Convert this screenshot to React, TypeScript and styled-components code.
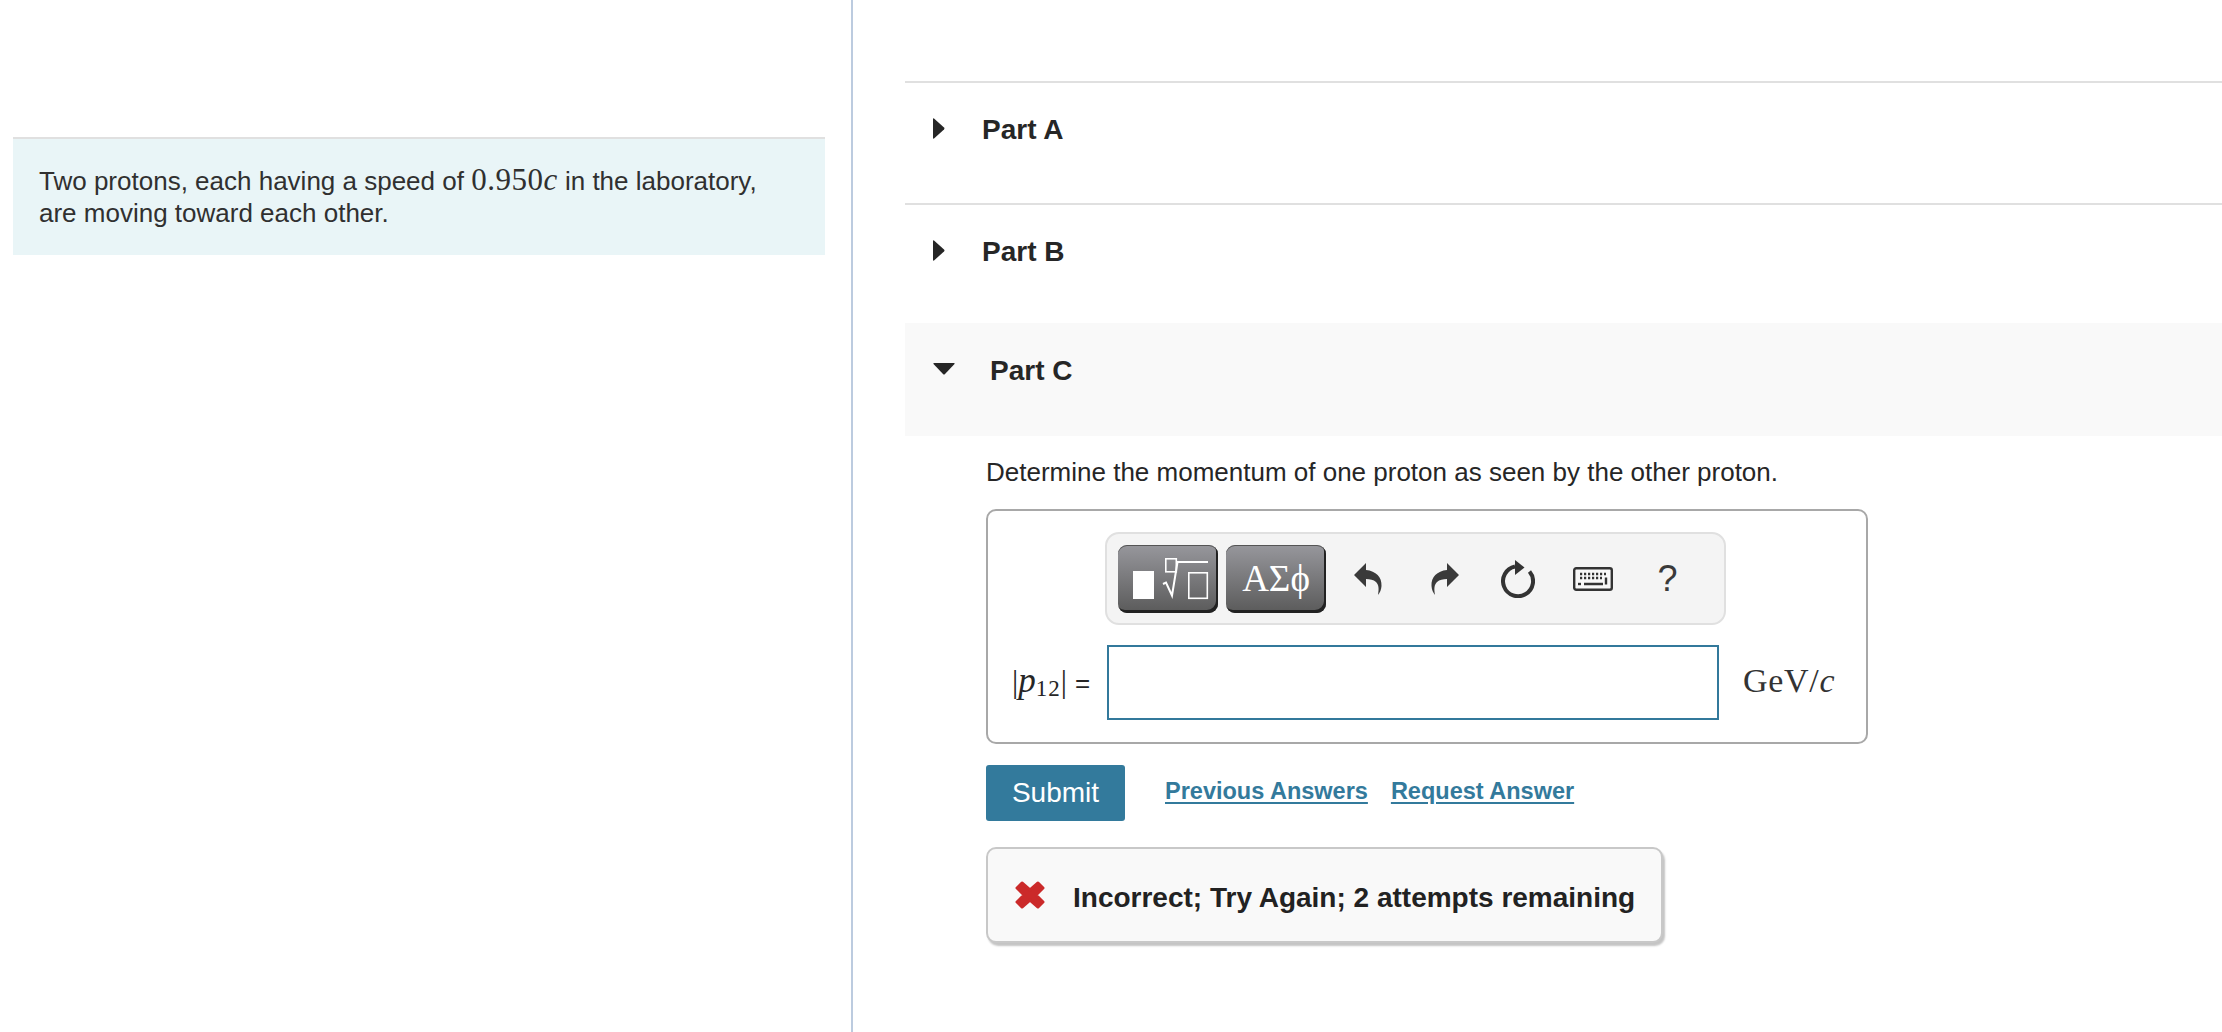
import styled, { createGlobalStyle } from 'styled-components';

const GlobalStyle = createGlobalStyle`
    html, body {
        margin: 0;
        padding: 0;
        background: #fff;
    }
    body {
        font-family: "Liberation Sans", Arial, sans-serif;
        color: #262626;
    }
`;

const Page = styled.div`
    display: flex;
    width: 2222px;
    height: 1032px;
    overflow: hidden;
`;

const LeftPane = styled.aside`
    box-sizing: border-box;
    flex: 0 0 853px;
    height: 100%;
    padding: 137px 26px 0 13px;
    border-right: 2px solid #bccbdf;
`;

const IntroBox = styled.div`
    box-sizing: border-box;
    height: 118px;
    padding: 25px 26px 0;
    border-top: 2px solid #e0e0e0;
    background: #e9f5f7;
    font-size: 26px;
    line-height: 32px;
    color: #303030;
`;

const MathText = styled.span`
    font-family: "Liberation Serif", "Times New Roman", serif;
    font-size: 31px;
    letter-spacing: 0.5px;

    i {
        font-style: italic;
    }
`;

const RightPane = styled.main`
    flex: 1;
    min-width: 0;
    padding: 81px 0 0 52px;
`;

const PartRow = styled.div<{ $open?: boolean; $height: number }>`
    box-sizing: border-box;
    display: flex;
    height: ${props => props.$height}px;
    padding: ${props => (props.$open ? '37px' : '35px')} 0 0 28px;
    border-top: ${props => (props.$open ? 'none' : '2px solid #e0e0e0')};
    background: ${props => (props.$open ? '#f9f9f9' : 'transparent')};
`;

const Caret = styled.svg<{ $open?: boolean }>`
    flex: none;
    width: ${props => (props.$open ? '22px' : '12px')};
    height: ${props => (props.$open ? '12px' : '21px')};
    margin-top: ${props => (props.$open ? '3px' : '0')};
    fill: #262626;
`;

const PartTitle = styled.h3<{ $open?: boolean }>`
    margin: ${props => (props.$open ? '-5px' : '-4px')} 0 0 ${props => (props.$open ? '35px' : '37px')};
    font-size: 28px;
    line-height: 32px;
    font-weight: 700;
    color: #262626;
`;

const PartBody = styled.div`
    margin-left: 81px;
    padding-top: 20px;
`;

const Question = styled.p`
    margin: 0 0 21px;
    font-size: 26px;
    line-height: 32px;
    color: #262626;
`;

const AnswerBox = styled.div`
    box-sizing: border-box;
    width: 882px;
    height: 235px;
    padding-top: 21px;
    border: 2px solid #a8a8a8;
    border-radius: 10px;
`;

const Toolbar = styled.div`
    box-sizing: border-box;
    display: flex;
    align-items: center;
    width: 621px;
    height: 93px;
    margin-left: 117px;
    padding-left: 11px;
    border: 2px solid #e0e0e0;
    border-radius: 14px;
    background: #f4f4f4;
`;

const PaletteButton = styled.button`
    box-sizing: border-box;
    display: flex;
    align-items: center;
    justify-content: center;
    width: 100px;
    height: 68px;
    margin-right: 8px;
    padding: 0;
    border: none;
    border-radius: 9px;
    background: linear-gradient(#97979c, #5a5a5a);
    box-shadow: inset -2px -3px 0 #222, inset 0 1px 0 #555;
    font-family: "Liberation Serif", serif;
    font-size: 37px;
    color: #fff;

    svg {
        width: 100px;
        height: 68px;
    }
`;

const ToolSlot = styled.div<{ $nudge?: number }>`
    flex: 0 0 75px;
    box-sizing: border-box;
    display: flex;
    align-items: center;
    justify-content: center;
    padding-left: ${props => props.$nudge ?? 0}px;
    font-size: 36px;
    color: #3a3a3a;

    &:first-of-type {
        margin-left: -4px;
    }
`;

const InputRow = styled.div`
    display: flex;
    align-items: center;
    margin-top: 20px;
`;

const AnswerLabel = styled.label`
    flex: 0 0 119px;
    box-sizing: border-box;
    margin-top: -3px;
    padding-left: 24px;
    font-family: "Liberation Serif", serif;
    font-size: 31px;
    white-space: nowrap;

    i {
        font-size: 35px;
    }

    sub {
        font-size: 23px;
        letter-spacing: 1px;
        line-height: 0;
        vertical-align: -4px;
    }

    b {
        margin-left: 8px;
        font-family: "Liberation Sans", sans-serif;
        font-size: 26px;
        font-weight: 400;
    }
`;

const AnswerInput = styled.input`
    box-sizing: border-box;
    width: 612px;
    height: 75px;
    border: 2px solid #33799b;
    outline: none;
    background: #fff;
`;

const Unit = styled.span`
    margin: -4px 0 0 24px;
    font-family: "Liberation Serif", serif;
    font-size: 34px;
    letter-spacing: 0.7px;
    color: #333;
    white-space: nowrap;
`;

const ActionRow = styled.div`
    display: flex;
    align-items: center;
    margin-top: 21px;
`;

const SubmitButton = styled.button`
    width: 139px;
    height: 56px;
    padding: 0;
    border: none;
    border-radius: 3px;
    background: #337a9c;
    font-family: "Liberation Sans", sans-serif;
    font-size: 28px;
    color: #fff;
`;

const ActionLink = styled.a<{ $first?: boolean }>`
    margin: -4px 0 0 ${props => (props.$first ? '40px' : '23px')};
    font-size: 23.5px;
    font-weight: 700;
    color: #337a9c;
    text-decoration: underline;
    text-underline-offset: 3px;
`;

const Feedback = styled.div`
    box-sizing: border-box;
    display: flex;
    align-items: center;
    width: 677px;
    height: 96px;
    margin-top: 26px;
    padding: 5px 0 0 27px;
    border: 2px solid #c8c8c8;
    border-radius: 10px;
    background: #f9f9f9;
    box-shadow: 2px 3px 2px #c4c4c4;
    font-size: 28px;
    font-weight: 700;
    color: #222;

    svg {
        flex: none;
        width: 30px;
        height: 28px;
        margin: -5px 28px 0 0;
    }
`;

const CaretIcon = ({ open }: { open?: boolean }) => (
    <Caret $open={open} viewBox={open ? '0 0 22 12' : '0 0 12 21'}>
        <path d={open ? 'M1 0h20q1 0 .5 1L12 11q-1 1-2 0L.5 1Q0 0 1 0z' : 'M0 1q0-1 1-.5L11 9.5q1 1 0 2L1 20.5q-1 .5-1-.5z'} />
    </Caret>
);

const UndoIcon = ({ flip }: { flip?: boolean }) => (
    <svg width="28" height="32" viewBox="0 0 28 32" style={flip ? { transform: 'scaleX(-1)' } : undefined}>
        <path fill="#3a3a3a" d="M0 12 12 0v7c10 1 16 7 15.500 16-.2 3.500-1.500 6.500-3.500 9 1-6 1-10-2-13-2.500-2.300-6-3-10-3v8z" />
    </svg>
);

const RefreshIcon = () => (
    <svg width="34" height="38" viewBox="0 0 34 38">
        <path fill="none" stroke="#333" strokeWidth="4" d="M28.500 11.500a15 15 0 1 1-14.500-5" />
        <path fill="#333" d="M14 0l9.500 7.500L14 15z" />
    </svg>
);

const KeyboardIcon = () => (
    <svg width="40" height="24" viewBox="0 0 40 24">
        <rect x="1.200" y="1.200" width="37.600" height="21.600" rx="2" fill="#f8f8f8" stroke="#333" strokeWidth="2.400" />
        <path stroke="#333" strokeWidth="2.600" strokeDasharray="2.200 1.800" d="M7 7h26M7 11h22" />
        <path stroke="#333" strokeWidth="2.400" fill="none" d="M11 17h19M33 17.500v-7" />
        <path stroke="#333" strokeWidth="2.400" d="M5 17h3" />
    </svg>
);

const TemplateIcon = () => (
    <svg viewBox="0 0 100 68">
        <rect x="15" y="26" width="21" height="28" fill="#fff" />
        <rect x="47.800" y="13.800" width="10.500" height="13" fill="none" stroke="#fff" strokeWidth="1.600" />
        <path fill="none" stroke="#fff" strokeWidth="2" d="M45 39l3-1.500 6 13L59.500 17H90" />
        <rect x="70.800" y="27.800" width="18.500" height="25.500" fill="none" stroke="#fff" strokeWidth="1.600" />
    </svg>
);

const CrossIcon = () => (
    <svg viewBox="0 0 30 28">
        <path fill="#cb2a2a" stroke="#cb2a2a" strokeWidth="3" strokeLinejoin="round" d="M7 2l8 7 8-7 5 5-7 7 7 7-5 5-8-7-8 7-5-5 7-7-7-7z" />
    </svg>
);

const App = () => {
    return (
        <Page>
            <GlobalStyle />
            <LeftPane>
                <IntroBox>
                    Two protons, each having a speed of <MathText>0.950<i>c</i></MathText> in the laboratory,
                    <br />
                    are moving toward each other.
                </IntroBox>
            </LeftPane>
            <RightPane>
                <PartRow $height={122}>
                    <CaretIcon />
                    <PartTitle>Part A</PartTitle>
                </PartRow>
                <PartRow $height={120}>
                    <CaretIcon />
                    <PartTitle>Part B</PartTitle>
                </PartRow>
                <PartRow $open $height={113}>
                    <CaretIcon open />
                    <PartTitle $open>Part C</PartTitle>
                </PartRow>
                <PartBody>
                    <Question>Determine the momentum of one proton as seen by the other proton.</Question>
                    <AnswerBox>
                        <Toolbar>
                            <PaletteButton><TemplateIcon /></PaletteButton>
                            <PaletteButton>ΑΣϕ</PaletteButton>
                            <ToolSlot><UndoIcon /></ToolSlot>
                            <ToolSlot $nudge={4}><UndoIcon flip /></ToolSlot>
                            <ToolSlot><RefreshIcon /></ToolSlot>
                            <ToolSlot><KeyboardIcon /></ToolSlot>
                            <ToolSlot>?</ToolSlot>
                        </Toolbar>
                        <InputRow>
                            <AnswerLabel>|<i>p</i><sub>12</sub>|<b>=</b></AnswerLabel>
                            <AnswerInput />
                            <Unit>GeV/<i>c</i></Unit>
                        </InputRow>
                    </AnswerBox>
                    <ActionRow>
                        <SubmitButton>Submit</SubmitButton>
                        <ActionLink $first href="#">Previous Answers</ActionLink>
                        <ActionLink href="#">Request Answer</ActionLink>
                    </ActionRow>
                    <Feedback>
                        <CrossIcon />
                        Incorrect; Try Again; 2 attempts remaining
                    </Feedback>
                </PartBody>
            </RightPane>
        </Page>
    );
};

export default App;
